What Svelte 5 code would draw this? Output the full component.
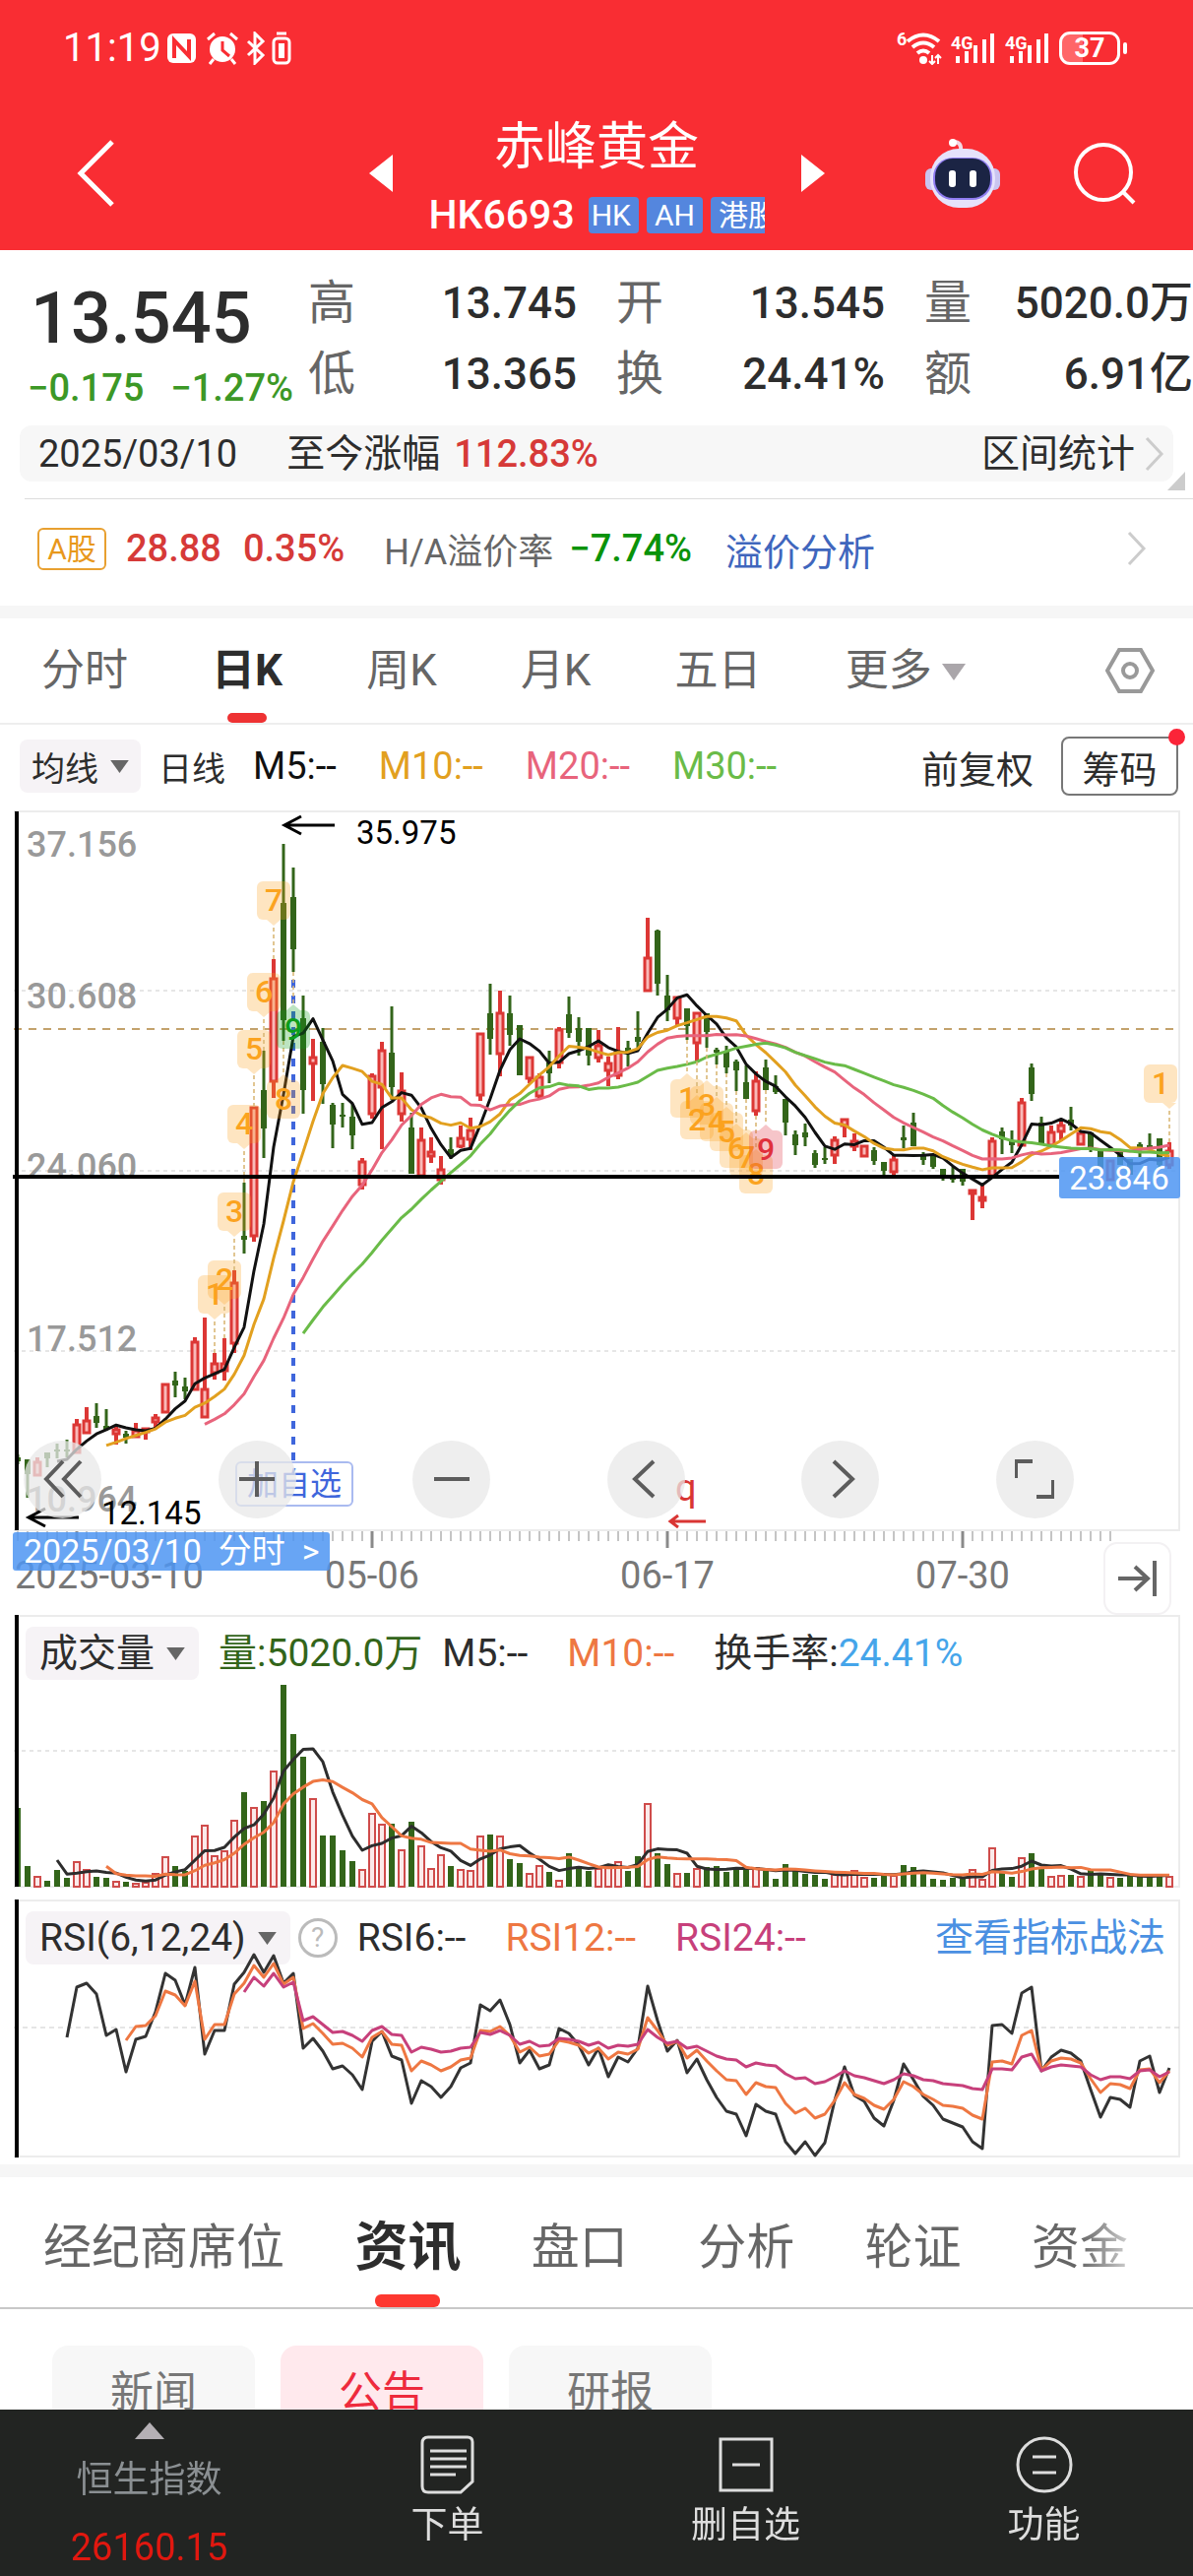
<script lang="ts">
	type Candle = [dir: 'r' | 'g', high: number, top: number, bottom: number, low: number, volume: number];
	type Marker = { n: number; x: number; y: number; from: number; up?: boolean; tone?: string; shift?: number };

	// prices are stored as chart offsets from the top edge, volumes as bar heights
	const candles: Candle[] = [
		['g', 657, 660, 664, 667, 80], ['g', 662, 662, 677, 701, 21], ['r', 660, 664, 677, 677, 11],
		['g', 655, 655, 661, 670, 6], ['g', 646, 652, 654, 661, 17], ['g', 642, 652, 654, 660, 9],
		['r', 621, 626, 654, 654, 26], ['r', 609, 622, 634, 634, 18], ['g', 605, 618, 625, 630, 10],
		['g', 611, 628, 632, 633, 9], ['r', 628, 631, 635, 647, 6], ['g', 633, 636, 640, 646, 5],
		['r', 625, 632, 638, 640, 4], ['r', 630, 630, 633, 642, 5], ['r', 616, 619, 623, 630, 14],
		['r', 585, 585, 613, 613, 31], ['g', 573, 582, 587, 599, 21], ['g', 579, 588, 593, 601, 16],
		['r', 538, 542, 590, 590, 52], ['r', 518, 590, 618, 618, 63], ['r', 554, 564, 573, 581, 32],
		['r', 539, 564, 571, 582, 37], ['r', 470, 482, 543, 554, 68], ['g', 381, 435, 439, 453, 96],
		['r', 304, 304, 434, 441, 81], ['g', 247, 287, 326, 356, 87], ['r', 154, 173, 277, 295, 118],
		['g', 37, 97, 216, 237, 205], ['g', 61, 91, 144, 167, 155], ['g', 191, 214, 287, 311, 132],
		['r', 235, 253, 259, 298, 90], ['g', 224, 238, 281, 301, 52], ['g', 300, 302, 322, 346, 52],
		['g', 300, 312, 314, 325, 37], ['g', 301, 314, 333, 347, 26], ['r', 356, 359, 382, 388, 18],
		['r', 270, 272, 310, 316, 75], ['r', 238, 246, 283, 347, 64], ['g', 202, 249, 284, 297, 64],
		['r', 269, 287, 310, 319, 38], ['g', 310, 325, 372, 372, 66], ['r', 325, 337, 373, 373, 42],
		['r', 335, 349, 353, 361, 19], ['r', 354, 367, 377, 383, 33], ['g', 335, 347, 353, 357, 21],
		['r', 323, 335, 343, 346, 18], ['r', 315, 327, 336, 348, 17], ['r', 229, 229, 291, 298, 52],
		['g', 179, 209, 235, 251, 53], ['r', 186, 208, 249, 273, 52], ['g', 191, 209, 231, 242, 28],
		['g', 221, 221, 272, 272, 24], ['r', 253, 253, 274, 280, 14], ['r', 270, 273, 292, 295, 22],
		['g', 247, 259, 270, 280, 15], ['r', 223, 225, 258, 265, 7], ['g', 192, 210, 229, 234, 34],
		['g', 213, 224, 238, 252, 21], ['g', 224, 224, 252, 262, 16], ['r', 226, 241, 253, 259, 19],
		['r', 253, 259, 266, 283, 21], ['r', 223, 248, 271, 276, 26], ['g', 237, 244, 249, 263, 16],
		['g', 207, 233, 238, 247, 31], ['r', 112, 152, 185, 185, 85], ['g', 124, 125, 179, 191, 34],
		['g', 170, 191, 206, 217, 23], ['r', 192, 192, 213, 221, 14], ['g', 204, 204, 222, 236, 14],
		['r', 208, 208, 238, 258, 19], ['g', 209, 209, 228, 244, 20], ['g', 244, 246, 249, 261, 21],
		['g', 242, 247, 264, 270, 15], ['g', 256, 258, 267, 288, 19], ['g', 262, 279, 296, 296, 18],
		['r', 268, 277, 307, 313, 20], ['g', 256, 264, 287, 287, 16], ['g', 272, 283, 289, 291, 8],
		['g', 296, 296, 320, 333, 23], ['g', 328, 332, 343, 353, 17], ['g', 321, 330, 335, 344, 13],
		['g', 348, 351, 363, 366, 12], ['g', 345, 356, 358, 362, 8], ['r', 334, 337, 352, 362, 13],
		['r', 316, 316, 322, 335, 14], ['r', 331, 338, 343, 349, 17], ['r', 343, 343, 353, 355, 10],
		['g', 345, 348, 359, 363, 9], ['g', 360, 360, 369, 373, 13], ['r', 353, 357, 369, 373, 12],
		['g', 323, 335, 338, 346, 22], ['g', 310, 320, 344, 344, 20], ['g', 350, 354, 358, 363, 13],
		['g', 353, 353, 365, 367, 8], ['g', 367, 367, 376, 379, 7], ['g', 365, 375, 378, 381, 9],
		['g', 367, 367, 380, 384, 8], ['r', 388, 388, 391, 419, 18], ['r', 383, 395, 398, 407, 8],
		['r', 335, 338, 373, 373, 40], ['g', 325, 329, 337, 352, 16], ['g', 328, 338, 343, 351, 10],
		['r', 295, 299, 342, 342, 30], ['g', 260, 264, 291, 298, 34], ['g', 314, 320, 341, 341, 20],
		['r', 323, 329, 342, 342, 11], ['r', 318, 322, 328, 339, 12], ['g', 304, 317, 323, 328, 12],
		['r', 330, 330, 341, 341, 11], ['g', 330, 330, 348, 350, 17], ['g', 349, 349, 367, 367, 13],
		['r', 358, 358, 377, 377, 10], ['g', 350, 350, 363, 363, 9], ['g', 357, 357, 373, 373, 11],
		['g', 340, 342, 347, 355, 11], ['g', 331, 343, 345, 348, 11], ['g', 336, 336, 363, 367, 13],
		['r', 340, 348, 362, 367, 11],
	];

	const rsi6 = [
		140, 89, 85, 96, 138, 132, 175, 142, 139, 114, 75, 82, 107, 69, 157, 133, 133, 86, 74, 56, 74, 57, 85, 75, 151,
		141, 154, 172, 169, 178, 193, 144, 134, 159, 163, 207, 184, 190, 201, 190, 171, 166, 107, 113, 102, 127, 166,
		153, 172, 168, 131, 136, 148, 168, 151, 180, 160, 165, 151, 88, 123, 154, 143, 176, 162, 183, 201, 215, 218,
		240, 208, 215, 218, 246, 258, 246, 260, 247, 204, 170, 199, 205, 222, 230, 204, 167, 183, 200, 209, 223, 227,
		231, 246, 253, 128, 127, 136, 95, 89, 174, 160, 153, 156, 164, 193, 221, 201, 203, 211, 164, 159, 196, 171,
	];
	const rsi12 = [
		143, 129, 128, 118, 93, 97, 108, 83, 142, 127, 127, 96, 85, 67, 79, 65, 86, 79, 131, 126, 136, 147, 146, 151,
		160, 140, 134, 147, 148, 174, 164, 168, 174, 170, 163, 161, 133, 134, 129, 138, 155, 150, 159, 157, 143, 145,
		148, 156, 151, 162, 155, 157, 152, 120, 133, 148, 144, 161, 153, 164, 174, 183, 184, 198, 186, 190, 191, 207,
		217, 212, 222, 218, 204, 186, 198, 202, 209, 213, 203, 185, 190, 198, 203, 209, 210, 212, 219, 223, 165, 164,
		167, 138, 133, 173, 164, 161, 162, 166, 182, 196, 187, 188, 192, 173, 172, 186, 174,
	];
	const rsi24 = [
		94, 79, 88, 75, 89, 84, 123, 119, 127, 135, 134, 138, 144, 133, 129, 137, 138, 155, 150, 152, 155, 154, 151,
		150, 135, 137, 133, 138, 147, 144, 149, 148, 141, 142, 144, 148, 145, 151, 148, 149, 147, 132, 140, 146, 144,
		151, 149, 154, 159, 162, 163, 170, 166, 168, 169, 177, 182, 181, 187, 185, 180, 174, 179, 181, 184, 187, 183,
		177, 179, 183, 184, 187, 188, 189, 192, 193, 172, 172, 173, 160, 157, 174, 170, 168, 169, 170, 178, 183, 180,
		180, 182, 174, 173, 180, 175,
	];

	const markers: Marker[] = [
		{ n: 1, x: 218, y: 475, from: 554 },
		{ n: 2, x: 228, y: 460, from: 539 },
		{ n: 3, x: 238, y: 391, from: 470 },
		{ n: 4, x: 248, y: 302, from: 381 },
		{ n: 5, x: 258, y: 226, from: 304 },
		{ n: 6, x: 268, y: 168, from: 247 },
		{ n: 7, x: 278, y: 75, from: 154 },
		{ n: 8, x: 288, y: 277, from: 237, up: true },
		{ n: 9, x: 298, y: 206, from: 167, up: true, tone: 'buy' },
		{ n: 1, x: 698, y: 276, from: 236, up: true },
		{ n: 2, x: 708, y: 298, from: 258, up: true },
		{ n: 3, x: 718, y: 283, from: 244, up: true },
		{ n: 4, x: 728, y: 300, from: 261, up: true },
		{ n: 5, x: 738, y: 310, from: 270, up: true },
		{ n: 6, x: 748, y: 327, from: 288, up: true },
		{ n: 7, x: 758, y: 336, from: 296, up: true },
		{ n: 8, x: 768, y: 353, from: 313, up: true },
		{ n: 9, x: 778, y: 328, from: 287, up: true, tone: 'sell' },
		{ n: 1, x: 1188, y: 261, from: 340, shift: -9 },
	];

	const cx = (i: number) => 18 + i * 10;

	function line(values: number[], start = 0): string {
		return values.map((v, i) => `${cx(i + start)},${v.toFixed(1)}`).join(' ');
	}

	function average(values: number[], n: number): string {
		const out: number[] = [];
		for (let i = n - 1; i < values.length; i++) {
			out.push(values.slice(i - n + 1, i + 1).reduce((a, b) => a + b, 0) / n);
		}
		return line(out, n - 1);
	}

	const closes = candles.map((c) => (c[0] === 'r' ? c[2] : c[3]));
	const volumes = candles.map((c) => 276 - c[5]);

	const averages = [
		{ n: 5, color: '#111' },
		{ n: 10, color: '#e2a01f' },
		{ n: 20, color: '#e8647c' },
		{ n: 30, color: '#6abb48' },
	];

	const priceLabels = [
		{ text: '37.156', y: 50 },
		{ text: '30.608', y: 204 },
		{ text: '24.060', y: 377 },
		{ text: '17.512', y: 552 },
		{ text: '10.964', y: 715 },
	];
	const dateLabels = [
		{ text: '2025-03-10', x: 15, anchor: 'start' },
		{ text: '05-06', x: 378, anchor: 'middle' },
		{ text: '06-17', x: 678, anchor: 'middle' },
		{ text: '07-30', x: 978, anchor: 'middle' },
	];

	const stats = [
		['高', '13.745'],
		['开', '13.545'],
		['量', '5020.0万'],
		['低', '13.365'],
		['换', '24.41%'],
		['额', '6.91亿'],
	];
	const periods = ['分时', '日K', '周K', '月K', '五日', '更多'];
	const sections = ['经纪商席位', '资讯', '盘口', '分析', '轮证', '资金'];
	const news = ['新闻', '公告', '研报'];

	let period = $state('日K');
	let section = $state('资讯');
	let chip = $state('公告');
</script>

{#snippet caret()}
	<svg class="caret" viewBox="0 0 20 14" aria-hidden="true"><path d="M0 0h20L10 14z" /></svg>
{/snippet}

{#snippet chevron()}
	<svg class="chevron" viewBox="0 0 20 36" aria-hidden="true"><path d="M2 2l15 16L2 34" /></svg>
{/snippet}

{#snippet signal()}
	<svg class="signal" viewBox="0 0 46 34" aria-hidden="true">
		<text x="0" y="18">4G</text>
		<path d="M7 25v7M16 20v12M25 14v18M34 8v24M42 2v30" />
	</svg>
{/snippet}

<div class="page">
	<header>
		<div class="status">
			<span class="clock">11:19</span>
			<svg class="status-icons" viewBox="0 0 126 34" aria-hidden="true">
				<rect x="0" y="2" width="29" height="30" rx="6" fill="#fff" />
				<path d="M7 27V9l15 16V8" fill="none" stroke="#f92d33" stroke-width="4" />
				<circle cx="56" cy="18" r="13" fill="#fff" />
				<path d="M41 8l7-6M71 8l-7-6M47 28l-4 5M65 28l4 5" stroke="#fff" stroke-width="3" />
				<path d="M56 10v9l7 6" fill="none" stroke="#f92d33" stroke-width="3" />
				<path d="M82 10l15 14-8 8V2l8 8-15 14" fill="none" stroke="#fff" stroke-width="3" />
				<rect x="108" y="7" width="16" height="25" rx="4" fill="none" stroke="#fff" stroke-width="3" />
				<rect x="113" y="12" width="6" height="15" fill="#fff" />
				<path d="M111 2h10" stroke="#fff" stroke-width="3" />
			</svg>
			<div class="status-right">
				<svg class="wifi" viewBox="0 0 46 34" aria-hidden="true">
					<text x="0" y="14">6</text>
					<path d="M11 10q16-13 32 0M16 16q11-9 22 0M21 22q6-5 12 0" />
					<circle cx="27" cy="29" r="4" />
					<path class="thin" d="M36 24v9M33 30l3 3 3-3M42 33v-9M39 27l3-3 3 3" />
				</svg>
				{@render signal()}
				{@render signal()}
				<span class="battery">37</span>
			</div>
		</div>
		<div class="title-bar">
			<button class="back" aria-label="返回">
				<svg viewBox="0 0 40 68"><path d="M36 2L4 34l32 32" /></svg>
			</button>
			<div class="switcher">
				<button aria-label="上一只"><svg viewBox="0 0 24 38"><path d="M24 0v38L0 19z" /></svg></button>
				<div class="stock">
					<h1>赤峰黄金</h1>
					<div class="code">
						<span>HK6693</span>
						<div class="tags"><i>HK</i><i>AH</i><i>港股</i></div>
					</div>
				</div>
				<button aria-label="下一只"><svg viewBox="0 0 24 38"><path d="M0 0v38l24-19z" /></svg></button>
			</div>
			<div class="tools">
				<button aria-label="智能助手">
					<svg class="robot" viewBox="0 0 76 70">
						<path d="M36 12Q37 3 29 3" fill="none" stroke="#f3d8e4" stroke-width="4" />
						<circle cx="28" cy="4" r="4" fill="#fff" />
						<rect x="0" y="30" width="12" height="22" rx="6" fill="#c9c4f0" />
						<rect x="64" y="30" width="12" height="22" rx="6" fill="#c9c4f0" />
						<rect x="5" y="10" width="66" height="60" rx="29" fill="#e6e2fb" />
						<rect x="8" y="19" width="60" height="43" rx="20" fill="#8f7cf0" />
						<rect x="10" y="20" width="56" height="40" rx="18" fill="#1b2444" />
						<rect x="24" y="32" width="7" height="17" rx="3" fill="#fff" />
						<rect x="45" y="32" width="7" height="17" rx="3" fill="#fff" />
					</svg>
				</button>
				<button aria-label="搜索">
					<svg class="search" viewBox="0 0 64 64"><circle cx="31" cy="31" r="28" /><path d="M51 51l11 11" /></svg>
				</button>
			</div>
		</div>
	</header>

	<section class="quote">
		<div class="last">
			<strong>13.545</strong>
			<div class="change"><span>−0.175</span><span>−1.27%</span></div>
		</div>
		<dl class="stats">
			{#each stats as [label, value]}
				<div><dt>{label}</dt><dd>{value}</dd></div>
			{/each}
		</dl>
	</section>

	<a class="interval" href="#interval">
		<span class="date">2025/03/10</span>
		<span class="since">至今涨幅</span>
		<span class="up">112.83%</span>
		<span class="range">区间统计</span>
		{@render chevron()}
		<svg class="corner" viewBox="0 0 18 19" aria-hidden="true"><path d="M18 0v19H0z" /></svg>
	</a>

	<a class="ah" href="#premium">
		<span class="ah-tag">A股</span>
		<span class="up">28.88</span>
		<span class="up pct">0.35%</span>
		<span class="premium">H/A溢价率</span>
		<span class="down">−7.74%</span>
		<span class="analysis">溢价分析</span>
		{@render chevron()}
	</a>

	<nav class="periods">
		<div class="period-list">
			{#each periods as p}
				<button class:active={period === p} onclick={() => (period = p)}>
					{p}{#if p === '更多'}{@render caret()}{/if}
				</button>
			{/each}
		</div>
		<button class="settings" aria-label="设置">
			<svg viewBox="0 0 50 48"><path d="M14 3h22l12 21-12 21H14L2 24z" /><circle cx="25" cy="24" r="7" /></svg>
		</button>
	</nav>

	<div class="ma-bar">
		<button class="picker">均线{@render caret()}</button>
		<span class="daily">日线</span>
		<span class="ma" style:color="#111">M5:--</span>
		<span class="ma" style:color="#e2a01f">M10:--</span>
		<span class="ma" style:color="#e8647c">M20:--</span>
		<span class="ma" style:color="#6abb48">M30:--</span>
		<span class="adjust">前复权</span>
		<button class="chips-btn">筹码</button>
	</div>

	<div class="panel">
		<svg class="plot" viewBox="0 0 1212 820">
			<path class="frame" d="M14 4H1198V734H14" />
			<path class="grid" d="M14 186H1198M14 369H1198M14 552H1198" />
			{#each priceLabels as l}
				<text class="axis" x="27" y={l.y}>{l.text}</text>
			{/each}
			<path d="M14 225H1198" stroke="#c3a26c" stroke-width="2" stroke-dasharray="8 7" />
			<path d="M298 175V663" stroke="#3f66dc" stroke-width="4" stroke-dasharray="8 8" />

			{#each candles as [dir, high, top, bottom, low], i}
				{#if dir === 'r'}
					<path class="wick-up" d="M{cx(i)} {high}V{top}M{cx(i)} {bottom}V{low}" />
					<rect class="body-up" x={cx(i) - 3} y={top + 1} width="6" height={bottom - top} />
				{:else}
					<path class="wick-down" d="M{cx(i)} {high}V{low}" />
					<rect class="body-down" x={cx(i) - 3} y={top} width="6" height={bottom - top} />
				{/if}
			{/each}

			{#each averages as a}
				<polyline class="avg" points={average(closes, a.n)} stroke={a.color} />
			{/each}

			{#each markers as m}
				{@const bx = m.x + (m.shift ?? 0)}
				<g class="marker {m.tone ?? ''}">
					<path class="lead" d="M{m.x} {m.from}V{m.up ? m.y - 6 : m.y + 45}" />
					<rect x={bx - 17} y={m.y} width="34" height="39" rx="6" />
					<path d={m.up ? `M${m.x - 7} ${m.y}l7-6 7 6z` : `M${m.x - 7} ${m.y + 39}l7 6 7-6z`} />
					<text x={bx} y={m.y + 30}>{m.n}</text>
				</g>
			{/each}

			<path d="M17 4V734" stroke="#000" stroke-width="4" />
			<path d="M13 375H1076" stroke="#000" stroke-width="4" />
			<path class="arrow" d="M340 18H289M306 9L289 18l17 9" />
			<text class="extreme" x="362" y="37">35.975</text>
			<path class="arrow" d="M80 721H29M46 712L29 721l17 9" />
			<text class="extreme" x="103" y="728">12.145</text>
			<path d="M717 725H681M689 719l-8 6 8 6" fill="none" stroke="#d93533" stroke-width="3" />
			<text x="686" y="704" font-size="38" fill="#d93533">q</text>

			<rect x="1076" y="355" width="123" height="42" rx="3" fill="#4e95f2" fill-opacity="0.85" />
			<text x="1137" y="388" font-size="33" fill="#fff" text-anchor="middle">23.846</text>

			{#each { length: 112 } as _, i}
				{@const major = cx(i) % 300 === 78}
				<path d="M{cx(i)} 735V{major ? 752 : 745}" stroke="#8a8a8a" stroke-width={major ? 3 : 1} />
			{/each}
			{#each dateLabels as d}
				<text class="date-label" x={d.x} y="793" text-anchor={d.anchor}>{d.text}</text>
			{/each}
		</svg>
		<button class="watch">加自选</button>
		<button class="day-link">2025/03/10&nbsp; 分时 &nbsp;&gt;</button>
		<div class="controls">
			<button aria-label="最早"><svg viewBox="0 0 40 40"><path d="M20 2L3 20l17 18M38 2L21 20l17 18" /></svg></button>
			<button aria-label="放大"><svg viewBox="0 0 40 40"><path d="M20 2v36M2 20h36" /></svg></button>
			<button aria-label="缩小"><svg viewBox="0 0 40 40"><path d="M2 20h36" /></svg></button>
			<button aria-label="左移"><svg viewBox="0 0 40 40"><path d="M28 2L9 20l19 18" /></svg></button>
			<button aria-label="右移"><svg viewBox="0 0 40 40"><path d="M13 2l19 18-19 18" /></svg></button>
			<button aria-label="全屏"><svg viewBox="0 0 40 40"><path d="M1 19V2h17M39 21v17H22" /></svg></button>
		</div>
		<button class="to-end" aria-label="最新">
			<svg viewBox="0 0 40 36"><path d="M0 18h29M17 6l13 12-13 12M37 0v36" /></svg>
		</button>
	</div>

	<div class="panel">
		<svg class="plot" viewBox="0 0 1212 289">
			<path class="frame" d="M14 1H1198V276H14" />
			<path class="grid" d="M14 138H1198" />
			{#each candles as c, i}
				{#if c[0] === 'r'}
					<rect class="vol-up" x={cx(i) - 3} y={277 - c[5]} width="6" height={c[5] - 1} />
				{:else}
					<rect class="body-down" x={cx(i) - 3} y={276 - c[5]} width="6" height={c[5]} />
				{/if}
			{/each}
			<polyline class="avg" points={average(volumes, 5)} stroke="#2d2d2d" />
			<polyline class="avg" points={average(volumes, 10)} stroke="#ee7742" />
			<path d="M17 0V276" stroke="#000" stroke-width="4" />
		</svg>
		<div class="legend">
			<button class="picker">成交量{@render caret()}</button>
			<span style:color="#33651a">量:5020.0万</span>
			<span class="empty">M5:--</span>
			<span class="empty" style:color="#ee7742">M10:--</span>
			<span>换手率:<b>24.41%</b></span>
		</div>
	</div>

	<div class="panel">
		<div class="legend">
			<button class="picker">RSI(6,12,24){@render caret()}</button>
			<button class="help" aria-label="说明">?</button>
			<span class="empty">RSI6:--</span>
			<span class="empty" style:color="#ee7742">RSI12:--</span>
			<span style:color="#c7407b">RSI24:--</span>
			<a href="#rsi">查看指标战法</a>
		</div>
		<svg class="plot over" viewBox="0 0 1212 269">
			<path class="frame" d="M14 1H1198V261H14" />
			<path d="M14 130H1198" stroke="#ccc" stroke-width="1" stroke-dasharray="5 4" />
			<polyline class="avg" points={line(rsi6, 5)} stroke="#333" />
			<polyline class="avg" points={line(rsi12, 11)} stroke="#ee7742" />
			<polyline class="avg" points={line(rsi24, 23)} stroke="#c7407b" />
			<path d="M17 0V262" stroke="#000" stroke-width="4" />
		</svg>
	</div>

	<nav class="sections">
		{#each sections as s}
			<button class:active={section === s} onclick={() => (section = s)}>{s}</button>
		{/each}
	</nav>

	<div class="news">
		{#each news as n}
			<button class:active={chip === n} onclick={() => (chip = n)}>{n}</button>
		{/each}
	</div>

	<footer>
		<button class="index">
			<svg viewBox="0 0 30 17" aria-hidden="true"><path d="M15 0l15 17H0z" /></svg>
			<span>恒生指数</span>
			<b>26160.15</b>
		</button>
		<button>
			<svg viewBox="0 0 60 60" aria-hidden="true">
				<path d="M10 2h40q5 0 5 5v40L43 58H10q-6 0-6-6V8q0-6 6-6zM12 16h37M12 24h37M12 32h37M12 40h26" />
			</svg>
			<span>下单</span>
		</button>
		<button>
			<svg viewBox="0 0 60 60" aria-hidden="true"><path d="M4 4h52v52H4zM16 30h28" /></svg>
			<span>删自选</span>
		</button>
		<button>
			<svg viewBox="0 0 60 60" aria-hidden="true"><circle cx="30" cy="30" r="27" /><path d="M18 22h24M18 38h24" /></svg>
			<span>功能</span>
		</button>
	</footer>
</div>

<style>
	:global(body) {
		background: #fff;
	}

	.page {
		min-height: 100vh;
		box-sizing: border-box;
		overflow-x: hidden;
		padding-bottom: 140px;
		font-family: Roboto, 'Noto Sans CJK SC', sans-serif;
		color: #2d2d2d;
	}

	button {
		padding: 0;
		border: 0;
		background: none;
		color: inherit;
		font: inherit;
	}

	a {
		color: inherit;
		text-decoration: none;
	}

	span,
	button {
		white-space: nowrap;
	}

	.up {
		color: #d63a38;
	}

	/* Header */
	header {
		background: #f92d33;
		color: #fff;
	}

	.status {
		display: flex;
		align-items: center;
		height: 98px;
		padding: 0 74px 0 64px;
	}

	.clock {
		font-size: 40px;
		line-height: 48px;
	}

	.status-icons {
		width: 126px;
		height: 34px;
		margin-left: 6px;
	}

	.status-right {
		display: flex;
		align-items: center;
		gap: 9px;
		margin-left: auto;
	}

	.wifi,
	.signal {
		width: 46px;
		height: 34px;
		fill: #fff;
		font-size: 18px;
		font-weight: 700;
	}

	.wifi path,
	.signal path {
		fill: none;
		stroke: #fff;
		stroke-width: 4;
	}

	.wifi .thin {
		stroke-width: 2;
	}

	.battery {
		position: relative;
		width: 56px;
		border: 3px solid #fff;
		border-radius: 11px;
		background: linear-gradient(90deg, #ff6668 37%, #f92d33 37%);
		font-size: 27px;
		font-weight: 700;
		line-height: 28px;
		text-align: center;
	}

	.battery::after {
		content: '';
		position: absolute;
		right: -10px;
		top: 8px;
		width: 4px;
		height: 12px;
		border-radius: 2px;
		background: #fff;
	}

	.title-bar {
		display: grid;
		grid-template-columns: 1fr auto 1fr;
		align-items: center;
		height: 156px;
	}

	.back {
		justify-self: start;
		margin-left: 78px;
	}

	.back svg {
		display: block;
		width: 40px;
		height: 68px;
		fill: none;
		stroke: #fff;
		stroke-width: 5;
	}

	.switcher {
		display: flex;
		align-items: center;
		gap: 37px;
	}

	.switcher svg {
		display: block;
		width: 24px;
		height: 38px;
		fill: #fff;
	}

	.stock {
		width: 341px;
		padding-top: 8px;
		text-align: center;
	}

	h1 {
		margin: 0;
		font-size: 52px;
		font-weight: 400;
		line-height: 76px;
	}

	.code {
		display: flex;
		align-items: center;
		gap: 14px;
		overflow: hidden;
		font-size: 41px;
		font-weight: 500;
		line-height: 60px;
	}

	.tags {
		display: flex;
		gap: 8px;
		flex: 1;
		overflow: hidden;
	}

	.tags i {
		flex: none;
		padding: 0 8px;
		border-radius: 4px;
		background: #5486de;
		font-size: 30px;
		font-style: normal;
		font-weight: 400;
		line-height: 37px;
	}

	.tags i:first-child {
		padding-left: 3px;
	}

	.tools {
		display: flex;
		justify-content: flex-end;
		align-items: center;
		gap: 74px;
		padding-right: 58px;
	}

	.tools svg {
		display: block;
	}

	.robot {
		width: 76px;
		height: 70px;
	}

	.search {
		width: 64px;
		height: 64px;
		fill: none;
		stroke: #fff;
		stroke-width: 4;
	}

	/* Quote */
	.quote {
		display: grid;
		grid-template-columns: 285px 1fr;
		padding: 18px 0 16px 28px;
	}

	.last {
		padding-top: 10px;
	}

	.last strong {
		display: block;
		padding-left: 3px;
		font-size: 72px;
		font-weight: 500;
		line-height: 84px;
	}

	.change {
		display: flex;
		gap: 27px;
		margin-top: 8px;
		color: #3c9826;
		font-size: 38px;
		font-weight: 500;
		line-height: 40px;
	}

	.stats {
		display: grid;
		grid-template-columns: repeat(3, 1fr);
		column-gap: 40px;
		margin: 0;
		font-size: 44px;
		line-height: 72px;
	}

	.stats div {
		display: flex;
		justify-content: space-between;
	}

	.stats dt {
		color: #666;
		font-size: 48px;
	}

	.stats dd {
		margin: 0;
		font-weight: 500;
		white-space: nowrap;
	}

	.interval {
		position: relative;
		display: flex;
		align-items: center;
		height: 57px;
		margin: 0 20px;
		padding: 0 9px 0 19px;
		border-radius: 12px;
		background: #f7f7f7;
		font-size: 38px;
	}

	.since {
		margin: 0 14px 0 50px;
		font-size: 40px;
	}

	.interval .up {
		font-weight: 500;
	}

	.range {
		margin: 0 10px 0 auto;
	}

	.since,
	.range {
		font-size: 39px;
		line-height: 52px;
	}

	.chevron {
		width: 20px;
		height: 36px;
		fill: none;
		stroke: #ccc;
		stroke-width: 3;
	}

	.corner {
		position: absolute;
		right: -12px;
		bottom: -9px;
		width: 18px;
		height: 19px;
		fill: #ccc;
	}

	.ah {
		display: flex;
		align-items: center;
		height: 100px;
		margin: 17px 0 0 25px;
		padding: 0 47px 8px 13px;
		border-top: 1px solid #ddd;
		font-size: 38px;
	}

	.ah-tag {
		width: 66px;
		margin-right: 20px;
		border: 2px solid #e8a030;
		border-radius: 6px;
		color: #e8981c;
		font-size: 30px;
		line-height: 39px;
		text-align: center;
	}

	.ah .up {
		font-weight: 500;
	}

	.pct {
		margin-left: 22px;
	}

	.premium {
		margin: 0 16px 0 40px;
		color: #666;
		font-size: 36px;
	}

	.down {
		color: #0a930a;
		font-weight: 500;
	}

	.analysis {
		margin: 0 auto 0 34px;
		color: #3f66bd;
	}

	/* Period tabs */
	.periods {
		display: flex;
		justify-content: space-between;
		align-items: center;
		height: 106px;
		padding: 0 39px 0 42px;
		border-top: 13px solid #f6f6f6;
		border-bottom: 2px solid #eee;
		color: #666;
		font-size: 44px;
	}

	.period-list {
		display: flex;
		justify-content: space-between;
		width: 83%;
		line-height: 106px;
	}

	.period-list .active {
		position: relative;
		color: #2d2d2d;
		font-weight: 700;
	}

	.period-list .active::after,
	.sections .active::after {
		content: '';
		position: absolute;
		left: 50%;
		bottom: 0;
		width: 40px;
		height: 10px;
		border-radius: 5px;
		background: #ee3233;
		transform: translateX(-50%);
	}

	.period-list .caret {
		width: 24px;
		height: 19px;
		margin-left: 10px;
		fill: #aaa6aa;
		vertical-align: 4px;
	}

	.settings svg {
		display: block;
		width: 50px;
		height: 48px;
		fill: none;
		stroke: #999;
		stroke-width: 4;
	}

	/* Chart */
	.ma-bar {
		display: flex;
		align-items: center;
		height: 84px;
		padding: 0 15px 0 20px;
		font-size: 38px;
	}

	.picker {
		display: flex;
		align-items: center;
		gap: 12px;
		height: 54px;
		padding: 0 14px;
		border-radius: 8px;
		background: #f6f3f6;
	}

	.picker .caret {
		width: 19px;
		height: 13px;
		fill: #666;
	}

	.ma-bar .picker {
		padding: 0 12px;
		font-size: 34px;
	}

	.daily {
		margin: 0 28px 0 18px;
		font-size: 34px;
	}

	.ma {
		margin-right: 43px;
	}

	.adjust {
		margin: 0 28px 0 auto;
	}

	.chips-btn {
		position: relative;
		width: 119px;
		height: 60px;
		border: 2px solid #777;
		border-radius: 8px;
	}

	.chips-btn::after {
		content: '';
		position: absolute;
		right: -9px;
		top: -10px;
		width: 17px;
		height: 17px;
		border-radius: 50%;
		background: #fb2438;
	}

	.panel {
		position: relative;
	}

	.plot {
		display: block;
		width: 100%;
	}

	.frame {
		fill: none;
		stroke: #ececec;
		stroke-width: 2;
	}

	.grid {
		stroke: #e6e6e6;
		stroke-width: 2;
		stroke-dasharray: 4 4;
	}

	.axis {
		fill: #999;
		font-size: 36px;
		font-weight: 500;
	}

	.date-label {
		fill: #777;
		font-size: 38px;
	}

	.extreme {
		fill: #000;
		font-size: 33px;
	}

	.arrow {
		fill: none;
		stroke: #000;
		stroke-width: 3;
	}

	.wick-up {
		stroke: #dc3735;
		stroke-width: 4;
	}

	.wick-down {
		stroke: #33651a;
		stroke-width: 3;
	}

	.body-up {
		fill: #f9b9b8;
		stroke: #dc3735;
		stroke-width: 3;
	}

	.body-down {
		fill: #33651a;
	}

	.vol-up {
		fill: #fbeaea;
		stroke: #cf4c4b;
		stroke-width: 2;
	}

	.avg {
		fill: none;
		stroke-width: 3;
		stroke-linejoin: round;
	}

	.marker {
		fill: #fba31f;
	}

	.marker.buy {
		fill: #0d9d1c;
	}

	.marker.sell {
		fill: #e0303c;
	}

	.marker rect,
	.marker path {
		fill-opacity: 0.28;
	}

	.marker text {
		font-size: 32px;
		font-weight: 500;
		text-anchor: middle;
	}

	.marker .lead {
		stroke: #d9b877;
		stroke-opacity: 0.8;
		stroke-width: 2;
		stroke-dasharray: 4 3;
	}

	.watch {
		position: absolute;
		left: 239px;
		top: 81%;
		height: 46px;
		padding: 0 10px;
		border: 2px solid #a9baf0;
		border-radius: 6px;
		background: #fff;
		color: #3f66dc;
		font-size: 32px;
		line-height: 40px;
	}

	.day-link {
		position: absolute;
		left: 13px;
		bottom: 45px;
		height: 39px;
		padding: 0 11px;
		border-radius: 3px;
		background: rgb(78 149 242 / 85%);
		color: #fff;
		font-size: 34px;
		line-height: 39px;
	}

	.controls {
		position: absolute;
		left: 2%;
		right: 10%;
		bottom: 12%;
		display: flex;
		justify-content: space-between;
	}

	.controls button {
		display: grid;
		place-items: center;
		width: 79px;
		height: 79px;
		border-radius: 50%;
		background: rgb(232 232 232 / 75%);
	}

	.controls svg {
		width: 40px;
		height: 40px;
		fill: none;
		stroke: #5c5c5c;
		stroke-width: 4;
	}

	.to-end {
		position: absolute;
		right: 22px;
		bottom: 0;
		display: grid;
		place-items: center;
		width: 69px;
		height: 74px;
		border: 2px solid #f3f1f3;
		border-radius: 14px;
		background: #fff;
	}

	.to-end svg {
		width: 40px;
		height: 36px;
		fill: none;
		stroke: #666;
		stroke-width: 4;
	}

	.legend {
		position: absolute;
		left: 26px;
		right: 28px;
		top: 12px;
		display: flex;
		align-items: center;
		gap: 20px;
		font-size: 39px;
		line-height: 50px;
	}

	.legend b {
		color: #45a5ea;
		font-weight: 400;
	}

	.legend a {
		margin-left: auto;
		color: #4a90e2;
		white-space: nowrap;
	}

	.empty {
		margin-right: 20px;
	}

	.over {
		position: relative;
		pointer-events: none;
	}

	.help {
		width: 40px;
		height: 40px;
		margin-left: -12px;
		border: 3px solid #bbb;
		border-radius: 50%;
		color: #bbb;
		font-size: 28px;
		line-height: 34px;
	}

	/* News */
	.sections {
		display: flex;
		justify-content: space-between;
		height: 132px;
		padding: 0 66px 0 44px;
		border-top: 13px solid #f6f6f6;
		border-bottom: 2px solid #c8c8c8;
		color: #666;
		font-size: 49px;
	}

	.sections .active {
		position: relative;
		color: #2d2d2d;
		font-size: 54px;
		font-weight: 700;
	}

	.sections .active::after {
		width: 66px;
		height: 13px;
		border-radius: 6px;
		background: #fd3830;
	}

	.sections button:last-child {
		background: linear-gradient(90deg, #666 50%, #ccc);
		background-clip: text;
		color: transparent;
	}

	.news {
		display: flex;
		gap: 26px;
		padding: 37px 53px 0;
	}

	.news button {
		width: 206px;
		height: 88px;
		border-radius: 16px;
		background: #f7f7f7;
		color: #777;
		font-size: 44px;
	}

	.news .active {
		background: #ffe9ed;
		color: #ee2b3d;
	}

	/* Bottom bar */
	footer {
		position: fixed;
		left: 0;
		right: 0;
		bottom: 0;
		display: grid;
		grid-template-columns: repeat(4, 1fr);
		height: 169px;
		background: #222422;
		color: #ddd;
		font-size: 37px;
	}

	footer button {
		display: flex;
		flex-direction: column;
		align-items: center;
		padding-top: 26px;
		line-height: 64px;
	}

	footer svg {
		width: 60px;
		height: 60px;
		fill: none;
		stroke: #ddd;
		stroke-width: 3;
	}

	footer .index {
		padding-top: 13px;
		color: #8a8f92;
		line-height: 68px;
	}

	.index svg {
		width: 30px;
		height: 17px;
		margin-bottom: 8px;
		fill: #b5b0b5;
		stroke: none;
	}

	.index b {
		color: #e01810;
		font-size: 38px;
		font-weight: 400;
	}
</style>
